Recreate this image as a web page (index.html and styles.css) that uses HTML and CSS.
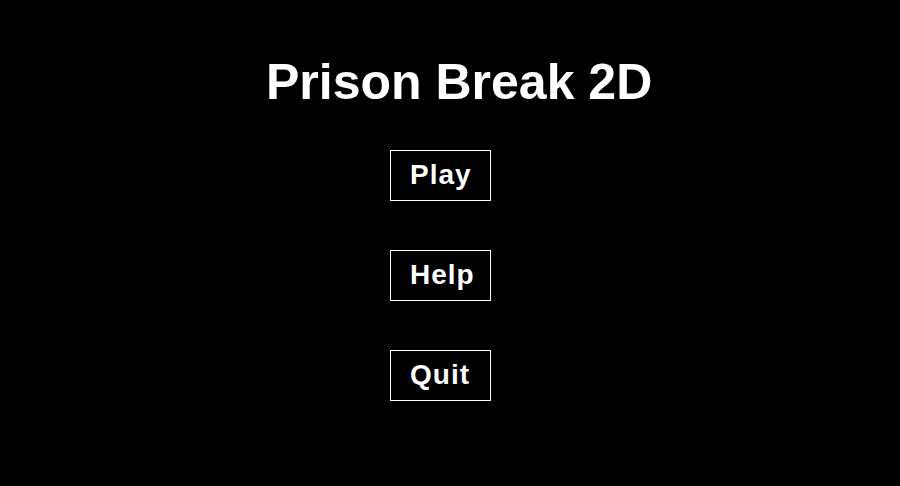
FILE: index.html
```html
<!DOCTYPE html>
<html>
<head>
<meta charset="utf-8">
<link rel="stylesheet" href="styles.css">
</head>
<body>
<main class="menu">
  <h1 class="title">Prison Break 2D</h1>
  <nav class="buttons">
    <div class="btn">Play</div>
    <div class="btn">Help</div>
    <div class="btn">Quit</div>
  </nav>
</main>
</body>
</html>
```
FILE: styles.css
```css
html, body {
  margin: 0;
  padding: 0;
  background: #000;
  width: 900px;
  height: 486px;
  overflow: hidden;
}
.menu {
  display: flex;
  flex-direction: column;
  padding-top: 52px;
  font-family: "Liberation Sans", Arial, sans-serif;
  color: #fff;
}
.title {
  margin: 0 0 0 266px;
  font-size: 50px;
  line-height: 60px;
  font-weight: bold;
}
.buttons {
  display: flex;
  flex-direction: column;
  gap: 49px;
  margin-left: 390px;
  margin-top: 38px;
}
.btn {
  box-sizing: border-box;
  width: 101px;
  height: 51px;
  border: 1px solid #fff;
  padding-left: 19px;
  font-size: 28px;
  font-weight: bold;
  line-height: 47px;
  letter-spacing: 1px;
}
```
